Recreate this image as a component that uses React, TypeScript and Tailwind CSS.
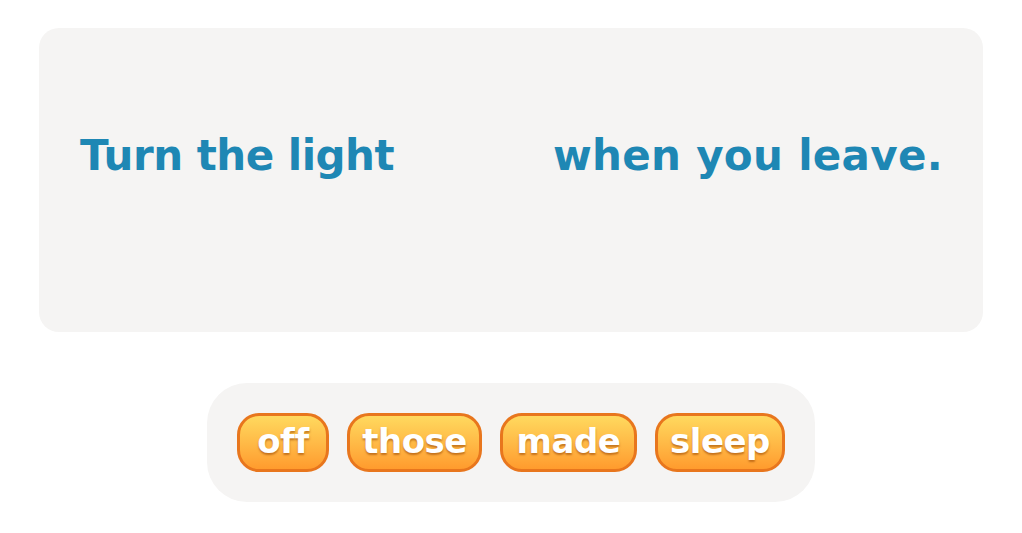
// Fill-in-the-blank exercise: sentence card + word bank tray

const words = [
  { text: 'off', w: 'w-[92px]' },
  { text: 'those', w: 'w-[135px]' },
  { text: 'made', w: 'w-[137px]' },
  { text: 'sleep', w: 'w-[130px]' },
]

function WordChip({ text, w }: { text: string; w: string }) {
  return (
    <button
      type="button"
      className={`${w} h-[59px] flex items-center justify-center rounded-[22px] border-[3px] border-[#e8761d] bg-linear-to-b from-[#ffd95e] to-[#ff9b2d] text-white text-[34px] font-bold leading-none pb-1 tracking-[-0.5px] [text-shadow:0_2px_2px_rgba(150,65,0,0.55)]`}
    >
      {text}
    </button>
  )
}

export default function App() {
  return (
    <div className="min-h-[533px] bg-white px-[39px] pt-[28px] font-['DejaVu_Sans','Liberation_Sans',sans-serif]">
      {/* Sentence card */}
      <div className="h-[304px] rounded-[20px] bg-[#f5f4f3] pl-[41px] pr-[40px] pt-[100px]">
        <div className="flex items-center justify-between h-[56px] text-[#1e87b4] text-[42px] font-bold leading-none tracking-[-0.5px]">
          <span>Turn the light</span>
          <span className="w-[150px]" />
          <span className="tracking-[0.3px]">when you leave.</span>
        </div>
      </div>

      {/* Word bank */}
      <div className="mt-[51px] flex justify-center">
        <div className="flex items-center gap-[18px] rounded-[40px] bg-[#f5f4f3] p-[30px]">
          {words.map(word => (
            <WordChip key={word.text} text={word.text} w={word.w} />
          ))}
        </div>
      </div>
    </div>
  )
}
